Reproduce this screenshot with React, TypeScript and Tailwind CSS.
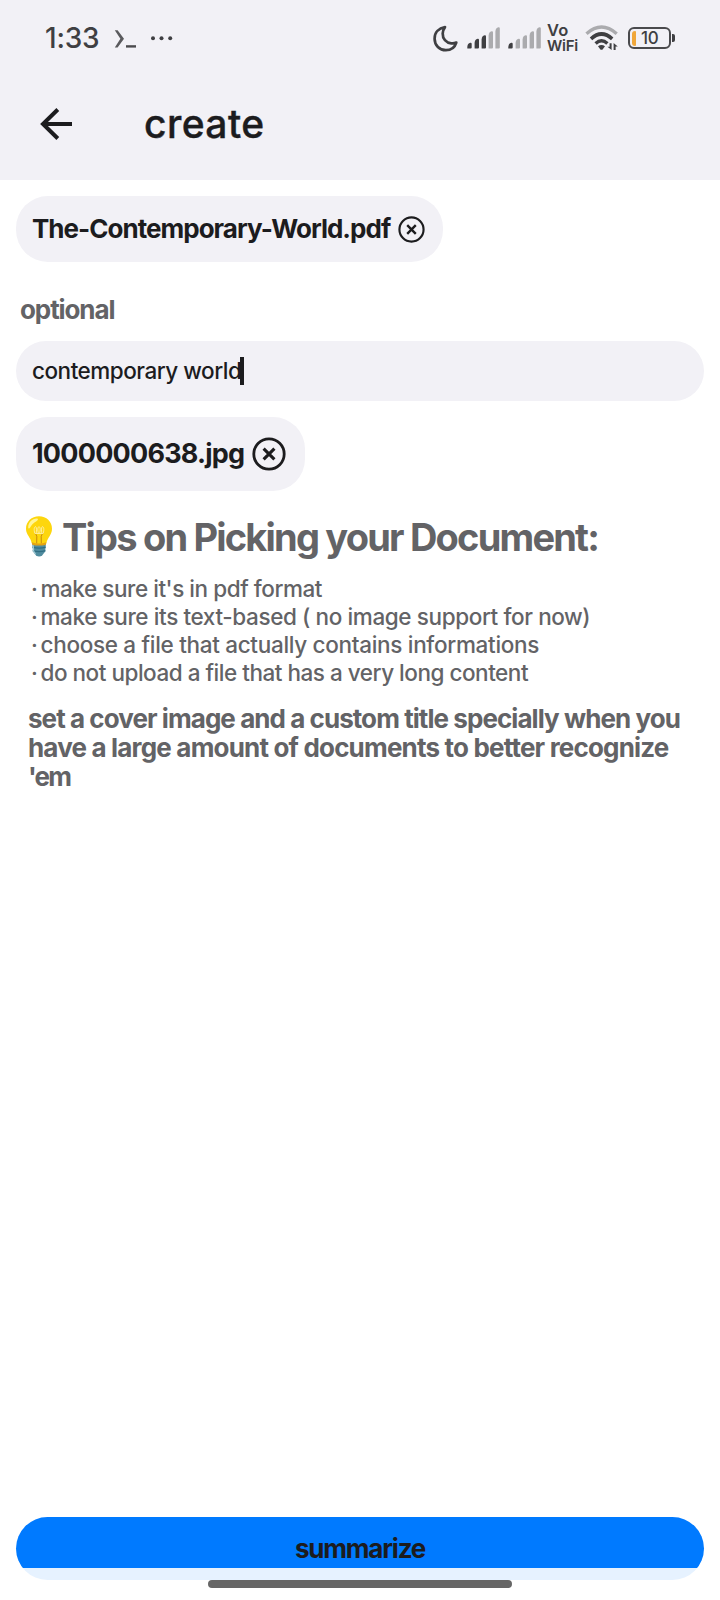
function Signal({ active }: { active: number }) {
  const bars = [
    { x: 0.3, y: 15.5 },
    { x: 7.6, y: 11.5 },
    { x: 14.6, y: 8 },
    { x: 21.6, y: 4 },
    { x: 28.4, y: 0 },
  ];
  return (
    <svg width="33" height="22" viewBox="0 0 33 22" className="shrink-0">
      {bars.map((b, i) => (
        <path
          key={b.x}
          d={`M${b.x} 21.5V${b.y + 4.5}Q${b.x + 0.3} ${b.y + 0.9} ${b.x + 3} ${b.y + 0.3}Q${b.x + 4.4} ${b.y} ${b.x + 4.4} ${b.y + 1.6}V20.4Q${b.x + 4.4} 21.5 ${b.x + 3.3} 21.5Z`}
          fill={i < active ? '#3f3f42' : '#ababae'}
        />
      ))}
    </svg>
  );
}

function StatusBar() {
  return (
    <div className="flex h-[76px] items-center pl-[45px] text-[#3f3f42]">
      <span className="w-[68px] text-[28px] leading-8 font-medium tracking-[-0.2px]">1:33</span>
      <svg width="62" height="20" viewBox="0 0 62 20" fill="none" className="mt-0.5 shrink-0">
        <path d="M1.8 1.2h2.8l6.4 8.6-6.4 8.6H1.8l5.6-8.6z" fill="#5a5a5d" />
        <path d="M13 17.4h10" stroke="#4a4a4d" strokeWidth="2.4" />
        <circle cx="40" cy="9.2" r="2" fill="currentColor" />
        <circle cx="48.5" cy="9.2" r="2" fill="currentColor" />
        <circle cx="57.2" cy="9.2" r="2" fill="currentColor" />
      </svg>
      <svg width="27" height="28" viewBox="0 0 27 28" fill="none" className="ml-[257px] mt-0.5 shrink-0">
        <path
          d="M13 2.2C6.8 3.2 2.6 7.6 2.6 13.7c0 6.6 5 11.5 11.3 11.5 5 0 9-3 10.4-7.6-1.8.7-3.3.9-5 .7C14 17.7 10.5 13.5 10.7 8.5c.1-2.4.9-4.4 2.3-6.3Z"
          stroke="currentColor"
          strokeWidth="2.7"
          strokeLinejoin="round"
        />
      </svg>
      <div className="ml-[8px] flex gap-2">
        <Signal active={3} />
        <Signal active={1} />
      </div>
      <div className="ml-[6px] flex w-[31px] flex-col font-semibold">
        <span className="text-[16.5px] leading-[15px] tracking-[0.2px]">Vo</span>
        <span className="text-[15px] leading-[15px] tracking-[-0.3px]">WiFi</span>
      </div>
      <svg width="34" height="26" viewBox="0 0 34 26" fill="none" className="ml-[7px] shrink-0">
        <path d="M1.5 8.7Q16.5-4.6 31.7 8.7" stroke="#ababae" strokeWidth="3.4" />
        <path d="M6 13.8Q16.5 4.2 27.2 13.8" stroke="currentColor" strokeWidth="3.6" />
        <path d="M10.6 18.5Q16.5 13 22.4 18.5" stroke="currentColor" strokeWidth="3.4" />
        <path d="M13 21.3Q16.5 18.7 20 21.3L17.6 24.4Q16.5 25.3 15.4 24.4Z" fill="currentColor" />
        <path d="M26.6 18.2V25l-4.2-3.3h2.2v-3.5zM28.6 25v-7l4.2 3.4h-2.2V25z" fill="currentColor" />
      </svg>
      <div className="relative ml-[9px] flex h-[22px] w-[43px] items-center rounded-[6px] border-2 border-[#4a4a4d] pl-[2px]">
        <span className="h-[15px] w-[4px] rounded-l-[3px] rounded-r-[1px] bg-[#f0a73a]" />
        <span className="ml-[5px] text-[17px] leading-4 font-medium tracking-[-0.4px]">10</span>
        <span className="absolute top-[5px] -right-[6px] h-[8px] w-[3px] rounded-r-[2px] bg-[#3f3f42]" />
      </div>
    </div>
  );
}

function CloseIcon({ size, stroke }: { size: number; stroke: number }) {
  return (
    <svg width={size} height={size} viewBox="0 0 34 34" fill="none" stroke="currentColor" strokeWidth={stroke} className="shrink-0">
      <circle cx="17" cy="17" r="15.2" />
      <path d="M11.6 11.6l10.8 10.8M22.4 11.6L11.6 22.4" strokeWidth={stroke + 0.3} />
    </svg>
  );
}

function Bulb() {
  return (
    <svg width="26" height="42" viewBox="0 0 26 42" fill="none" className="mt-0.5 shrink-0">
      <path d="M6.2 27h13.8l-.8 8.5-2.9 3.7Q13.2 42 9.9 39.2L7 35.5z" fill="#508c9f" />
      <path d="M6.5 31.2q6.7 1.8 13.2 0M6.7 34.6q6.6 2 12.7 0" stroke="#306e83" strokeWidth="1.3" />
      <path d="M7.3 29.3l.3 5.8 2 3.2" stroke="#9cc7d2" strokeWidth="1.2" />
      <path d="M13 .3C5.5.3 0 5.7 0 12.7c0 6.3 4.8 8.5 5.7 14.5.2 1.5 14.3 1.7 14.7 0C21.4 21.4 26 19 26 12.7 26 5.7 20.5.3 13 .3Z" fill="#fdd60d" />
      <path d="M5.9 26.2q7 2.5 14.4 0l-.4 2.5q-6.8 1.7-13.7 0z" fill="#e5a313" />
      <path d="M10.7 27.2l.1-7-2-4M15.3 27.2l-.1-7 2-4" stroke="#c98a10" strokeWidth="1" />
      <path d="M8.8 17.2C7.5 13 8.5 10.3 9.7 10.7s.8 5.5.2 6.9M12.6 17.6c-1.3-3.5-.8-6.9.4-6.9s1.7 3.4.4 6.9M16.1 17.6c-.6-1.4-1-6.5.2-6.9s2.2 2.3.9 6.5M8.8 17.4h8.4" stroke="#fff0a0" strokeWidth="1" />
      <path d="M2.2 11.2C2.4 6 6.5 2.3 11 2.6c1.4.2 1.4 1.6-.6 2.7C7.6 6.7 5.4 9.3 4.1 11.6c-.9 1.4-1.9 1-1.9-.4Z" fill="#fff59a" />
    </svg>
  );
}

const tips = [
  { text: "make sure it's in pdf format", style: 'tracking-[-0.45px]' },
  { text: 'make sure its text-based ( no image support for now)', style: 'tracking-[-0.39px]' },
  { text: 'choose a file that actually contains informations', style: 'tracking-[-0.31px]' },
  { text: 'do not upload a file that has a very long content', style: 'tracking-[-0.48px]' },
];

export default function App() {
  return (
    <div className="flex h-[1600px] w-[720px] flex-col overflow-hidden bg-white font-[Inter,sans-serif] text-[#1c1c1e]">
      <header className="h-[180px] shrink-0 bg-[#f2f1f6]">
        <StatusBar />
        <div className="flex h-24 items-center pl-10">
          <svg width="33" height="32" viewBox="0 0 33 32" fill="none" stroke="currentColor" strokeWidth="4" className="shrink-0">
            <path d="M17.8 1.5L3 16l14.8 14.5M3 16h29" />
          </svg>
          <h1 className="ml-[71px] text-[39px] leading-12 font-medium tracking-[0.4px] [-webkit-text-stroke:0.4px]">create</h1>
        </div>
      </header>

      <main className="flex grow flex-col items-start px-4 pt-4">
        <div className="flex h-[66px] w-[427px] items-center rounded-[32px] bg-[#f2f1f6] pl-4">
          <span className="w-[366px] text-[26px] leading-8 font-bold tracking-[-0.98px] whitespace-nowrap">
            The-Contemporary-World.pdf
          </span>
          <CloseIcon size={27} stroke={2.7} />
        </div>

        <label className="mt-8 ml-1 text-[26px] leading-8 font-bold tracking-[-1.1px] text-[#636366]">optional</label>

        <div className="mt-[15px] flex h-[60px] w-full items-center rounded-[30px] bg-[#f2f1f6] pl-4">
          <span className="pb-px text-[22.5px] leading-7 font-medium tracking-[-0.49px]">contemporary world</span>
          <span className="-ml-[1px] h-7 w-1 bg-[#1c1c1e]" />
        </div>

        <div className="mt-4 flex h-[74px] w-[289px] items-center rounded-[32px] bg-[#f2f1f6] pl-4">
          <span className="w-[220px] text-[27px] leading-8 font-bold tracking-[-0.78px] whitespace-nowrap">1000000638.jpg</span>
          <CloseIcon size={34} stroke={2.8} />
        </div>

        <section className="mt-5 w-full text-[#636366]">
          <div className="flex h-[50px] items-center pl-[10px]">
            <Bulb />
            <h2 className="ml-[10px] pt-px text-[38px] leading-[50px] font-bold tracking-[-1.8px] whitespace-nowrap">
              Tips on Picking your Document:
            </h2>
          </div>
          <ul className="mt-[14px] pl-[15px] text-[22.5px] leading-7 font-medium">
            {tips.map((tip) => (
              <li key={tip.text} className="flex items-center whitespace-nowrap">
                <span className="w-[9.5px]">·</span>
                <span className={tip.style}>{tip.text}</span>
              </li>
            ))}
          </ul>
          <p className="mt-[18px] pl-3 text-[26px] leading-[28.8px] font-bold tracking-[-0.94px] whitespace-nowrap">
            set a cover image and a custom title specially when you
            <br />
            <span className="tracking-[-0.82px]">have a large amount of documents to better recognize</span>
            <br />
            <span className="tracking-[-1.8px]">'em</span>
          </p>
        </section>
      </main>

      <footer className="relative h-[83px] shrink-0 px-4">
        <button className="block h-[63px] w-full rounded-[32px] bg-[#007aff] text-[26px] leading-[63px] font-bold tracking-[-1.2px]">
          summarize
        </button>
        <div className="absolute inset-x-0 bottom-0 flex h-8 justify-center bg-white/90 pt-3">
          <div className="h-2 w-[304px] rounded-full bg-[#666666]" />
        </div>
      </footer>
    </div>
  );
}
